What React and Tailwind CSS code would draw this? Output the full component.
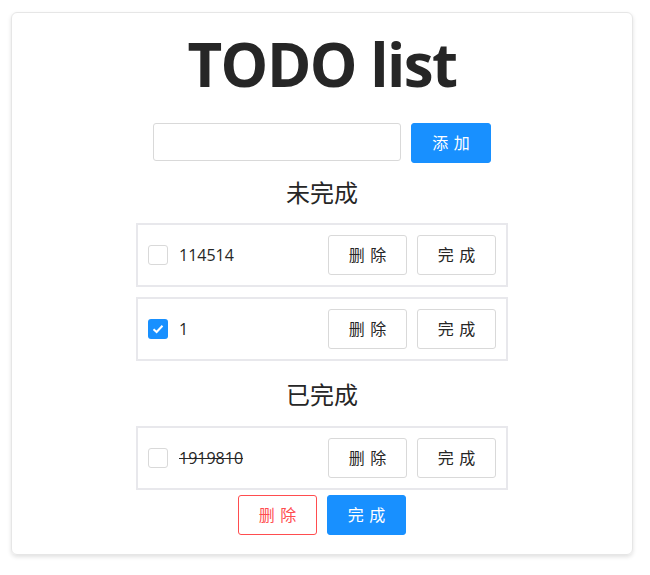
import React, { useState } from 'react';

const FONT = { fontFamily: '"Open Sans", "Noto Sans CJK SC", sans-serif' };

const Btn = ({ children, variant = 'default', w = 'w-[79px]' }) => {
    const styles = {
        default: 'bg-white border-[#d9d9d9] text-[#262626]',
        primary: 'bg-[#1890ff] border-[#1890ff] text-white',
        danger: 'bg-white border-[#ff4d4f] text-[#ff4d4f]',
    };
    return (
        <button className={`${w} h-10 border rounded-[3px] text-base flex items-center justify-center ${styles[variant]}`}>
            <span className="tracking-[0.34em] -mr-[0.34em]">{children}</span>
        </button>
    );
};

const CheckBox = ({ checked }) => (
    checked ? (
        <span className="w-5 h-5 rounded-[3px] bg-[#1890ff] flex items-center justify-center shrink-0">
            <svg width="12" height="10" viewBox="0 0 12 10" fill="none">
                <path d="M1.5 5.2 L4.6 8 L10.5 1.8" stroke="white" strokeWidth="2" />
            </svg>
        </span>
    ) : (
        <span className="w-5 h-5 rounded-[3px] border border-[#d9d9d9] bg-white shrink-0" />
    )
);

const TodoItem = ({ text, checked, done }) => (
    <div className="w-[372px] h-16 border-2 border-[#e8e8ec] flex items-center pl-[10px] pr-[10px]">
        <CheckBox checked={checked} />
        <span className={`ml-[11px] text-base text-[#262626] ${done ? 'line-through' : ''}`}>{text}</span>
        <div className="ml-auto flex gap-[10px]">
            <Btn>删除</Btn>
            <Btn>完成</Btn>
        </div>
    </div>
);

export default function App() {
    const [value, setValue] = useState('');

    return (
        <div className="bg-white min-h-[575px] pt-[12px] pl-[11px]" style={FONT}>
            <div className="w-[622px] h-[543px] border border-[#e6e6e6] rounded-md shadow-[0_2px_4px_rgba(0,0,0,0.12)] flex flex-col items-center">
                <h1 className="text-[60px] font-bold text-[#262626] leading-none tracking-[-1.5px] mt-[21px]">TODO list</h1>
                <div className="flex gap-[10px] mt-[29px]">
                    <input
                        value={value}
                        onChange={(e) => setValue(e.target.value)}
                        className="w-[248px] h-[38px] border border-[#d9d9d9] rounded-[3px] px-3 outline-none"
                    />
                    <Btn variant="primary" w="w-20">添加</Btn>
                </div>
                <h2 className="text-[24px] text-[#262626] leading-none mt-[18px]">未完成</h2>
                <div className="flex flex-col gap-[10px] mt-[18px]">
                    <TodoItem text="114514" />
                    <TodoItem text="1" checked />
                </div>
                <h2 className="text-[24px] text-[#262626] leading-none mt-[22px]">已完成</h2>
                <div className="mt-[19px]">
                    <TodoItem text="1919810" done />
                </div>
                <div className="flex gap-[10px] mt-[5px]">
                    <Btn variant="danger">删除</Btn>
                    <Btn variant="primary">完成</Btn>
                </div>
            </div>
        </div>
    );
}
